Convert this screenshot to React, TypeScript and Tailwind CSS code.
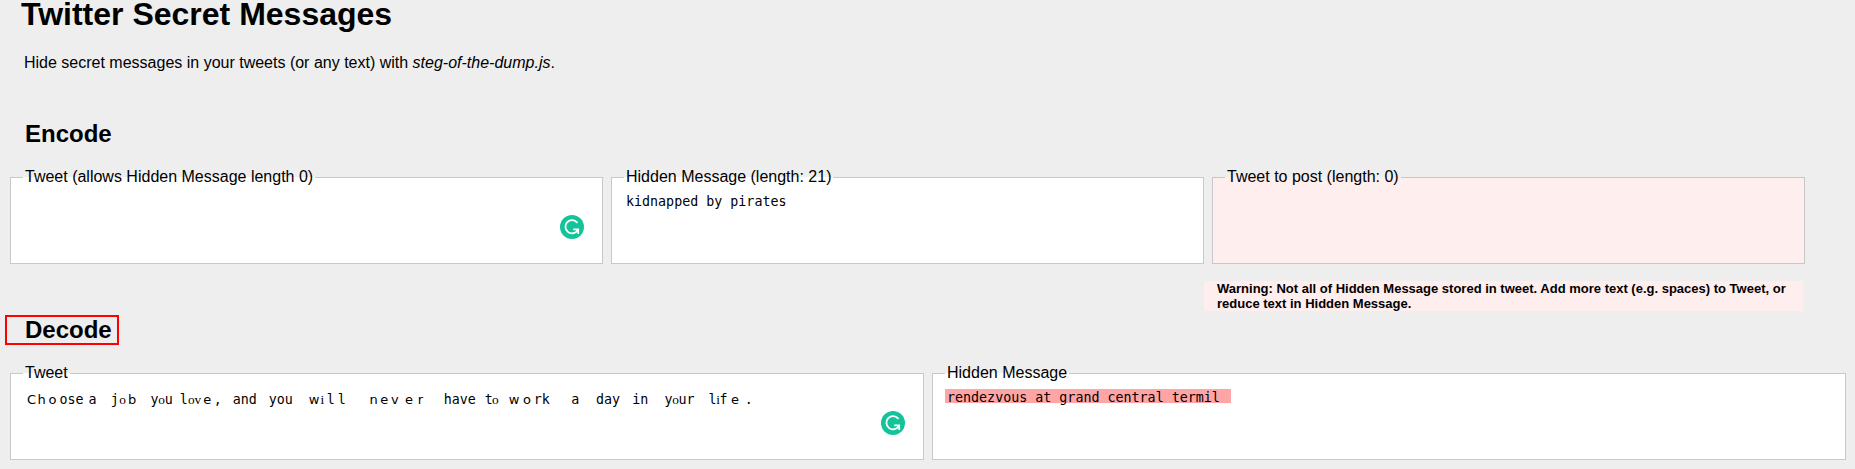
import type { ReactNode } from "react";

type Kind = "mono" | "wide" | "serif";
type Run = [text: string, x: number, kind: Kind];

// Each run starts at x pixels from the left edge of the text area.
const tweetRuns: Run[] = [
  ["C", 0.2, "wide"], ["h", 10.8, "wide"], ["o", 21.8, "wide"], ["ose", 32.6, "mono"],
  ["a", 61.7, "mono"], ["j", 83.9, "mono"], ["o", 92.5, "serif"], ["b", 101.3, "wide"],
  ["y", 123.8, "mono"], ["o", 131.6, "serif"], ["u", 137.9, "mono"], ["l", 153, "mono"],
  ["o", 161.2, "serif"], ["v", 167.8, "serif"], ["e", 176.5, "wide"], [",", 187, "mono"],
  ["and", 206, "mono"], ["you", 242, "mono"], ["w", 282, "wide"], ["i", 293.7, "serif"],
  ["l", 300, "mono"], ["l", 311, "mono"], ["n", 342.8, "wide"], ["e", 353.6, "wide"],
  ["v", 364.3, "wide"], ["e", 378.2, "wide"], ["r", 391, "wide"], ["have", 417, "mono"],
  ["t", 458, "mono"], ["o", 465.3, "serif"], ["w", 482.2, "wide"], ["o", 496.3, "wide"],
  ["rk", 507.1, "mono"], ["a", 544.6, "mono"], ["day", 569.3, "mono"], ["in", 605.6, "mono"],
  ["y", 637.8, "mono"], ["o", 645.6, "serif"], ["ur", 651.9, "mono"], ["l", 682, "mono"],
  ["i", 689.7, "serif"], ["f", 693, "mono"], ["e", 704.5, "wide"], [".", 718.2, "mono"],
];

const fonts: Record<Kind, string> = {
  mono: "font-['DejaVu_Sans_Mono',monospace] text-[13.333px]",
  wide: "font-['DejaVu_Sans',sans-serif] text-[13px]",
  serif: "font-['Liberation_Serif',serif] text-[13.333px]",
};

function TweetText() {
  return (
    <div className="flex h-4 items-baseline pl-[4px] leading-[16px]">
      {tweetRuns.map(([text, x, kind], i) => {
        const next = tweetRuns[i + 1];
        return (
          <span
            key={i}
            className={`${fonts[kind]} block shrink-0 whitespace-pre`}
            style={{ width: (next ? next[1] : x + 10) - x }}
          >
            {text}
          </span>
        );
      })}
    </div>
  );
}

function Assistant() {
  return (
    <svg className="size-6" viewBox="0 0 24 24" fill="none">
      <circle cx="12" cy="12" r="12" fill="#15c39a" />
      <path
        d="M17 7.4A6.6 6.6 0 1 0 17.5 15.4"
        stroke="#fff"
        strokeWidth="1.8"
        strokeLinecap="round"
      />
      <path d="M13.2 14.4H18.2V19" stroke="#fff" strokeWidth="1.7" />
      <path d="M15.4 14.4H18.2V17.2Z" fill="#fff" />
    </svg>
  );
}

function Field({ label, tone = "bg-white", width, children }: {
  label: string;
  tone?: string;
  width: string;
  children?: ReactNode;
}) {
  return (
    <fieldset className={`${tone} ${width} h-[96px] shrink-0 border border-[#c8c8c8] px-3`}>
      <legend className="px-[2px] text-[16px] leading-[18px]">{label}</legend>
      {children}
    </fieldset>
  );
}

export default function App() {
  return (
    <div className="h-screen overflow-hidden bg-[#eeeeee] font-['Liberation_Sans',Arial,sans-serif] text-black">
      <h1 className="pl-[21px] text-[32px] leading-[28px] font-bold">Twitter Secret Messages</h1>
      <p className="mt-[26px] pl-[24px] text-[16px] leading-[17px]">
        Hide secret messages in your tweets (or any text) with <em>steg-of-the-dump.js</em>.
      </p>

      <h2 className="mt-[49px] pl-[25px] text-[24px] leading-[27px] font-bold">Encode</h2>
      <div className="mt-[21px] flex gap-2 pl-[10px]">
        <Field label="Tweet (allows Hidden Message length 0)" width="w-[593px]">
          <div className="flex justify-end pt-[29px] pr-[6px]"><Assistant /></div>
        </Field>
        <Field label="Hidden Message (length: 21)" width="w-[593px]">
          <div className="pt-[8px] pl-[2px] font-['DejaVu_Sans_Mono',monospace] text-[13.333px] leading-[16px]">
            kidnapped by pirates
          </div>
        </Field>
        <Field label="Tweet to post (length: 0)" width="w-[593px]" tone="bg-[#ffeeee]" />
      </div>
      <div className="mt-[17px] ml-[1204px] w-[599px] bg-[#ffeeee] px-[13px] text-[13px] leading-[15px] font-bold">
        Warning: Not all of Hidden Message stored in tweet. Add more text (e.g. spaces) to Tweet, or
        reduce text in Hidden Message.
      </div>

      <h2 className="mt-[4px] ml-[5px] h-[30px] w-[114px] border-2 border-[#ff0000] pl-[18px] text-[24px] leading-[25px] font-bold">
        Decode
      </h2>
      <div className="mt-[19px] flex gap-2 pl-[10px]">
        <Field label="Tweet" width="w-[914px]">
          <div className="pt-[10px]"><TweetText /></div>
          <div className="flex justify-end pt-[3px] pr-[6px]"><Assistant /></div>
        </Field>
        <Field label="Hidden Message" width="w-[914px]">
          <div className="mt-[7px] h-[14px] w-[286px] bg-[#ffa5a5] pl-[2px] font-['DejaVu_Sans_Mono',monospace] text-[13.333px] leading-[18px]">
            rendezvous at grand central termil
          </div>
        </Field>
      </div>
    </div>
  );
}
